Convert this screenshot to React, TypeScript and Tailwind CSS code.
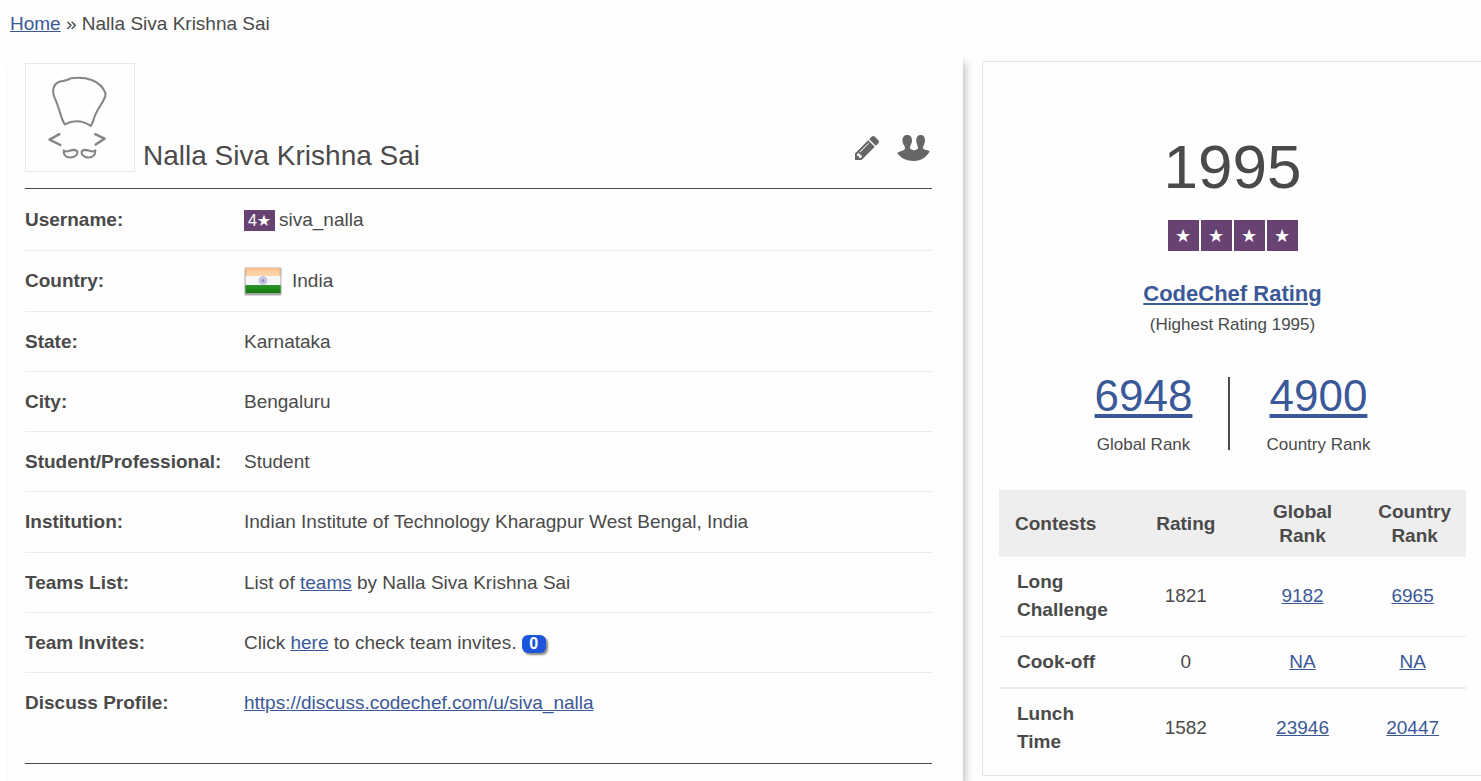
import type { ReactNode } from "react";

const link = "text-[#3b5998] underline";

function Avatar() {
  return (
    <svg viewBox="0 0 110 109" className="h-[109px] w-[110px] shrink-0 border border-[#e8e8e8]" role="img" aria-label="Profile picture">
      <g fill="none" stroke="#858585" strokeWidth="2.100" strokeLinejoin="round" strokeLinecap="round">
        <path d="M39.500 61.500C36 57 34.500 47 30.500 37.500C25 27 28 20 34.500 17.800C40 17 42 17 46 14.500C60 12.500 76 16 81 30C81.500 38 71 45 68.500 58L66 63C57 57 48 57 39.500 61.500Z" />
        <path d="M34 71.500L24 77L35 82.500M70.500 71.500L80 76L71 82" strokeWidth="2.500" />
        <path d="M38.500 88C41 91 44.500 87.500 49 87.500C54 88 53 92.500 49 94.500C43 96.500 38 94.500 38.500 88Z" />
        <path d="M70.500 88C68 91 64.500 87.500 60 87.500C55 88 56 92.500 60 94.500C65 96.500 71 94.500 70.500 88Z" />
      </g>
    </svg>
  );
}

function PencilIcon() {
  return (
    <svg viewBox="128 149 1515 1515" className="size-6" fill="#666" aria-hidden="true">
      <path d="M491 1536l91-91-235-235-91 91v107h128v128h107zm523-928q0-22-22-22-10 0-17 7l-542 542q-7 7-7 17 0 22 22 22 10 0 17-7l542-542q7-7 7-17zm-54-192l416 416-832 832h-416v-416l832-832zm683 96q0 53-37 90l-166 166-416-416 166-165q36-38 90-38 53 0 91 38l235 234q37 39 37 91z" />
    </svg>
  );
}

function TeamIcon() {
  return (
    <svg viewBox="0 0 33 26" className="h-[26px] w-[33px]" fill="#666" aria-hidden="true">
      <path d="M10.300 0C13.500 0 15 2 15 5.500C15 9 13 10.500 13 12.500C13 14.500 15.500 14.800 17.200 15.500C18.500 14.800 21 14.500 21 13C21 11 19.200 9 19.200 5.500C19.200 2 20.800 0 23.700 0C26.700 0 28 2 28 5.500C28 9 26 11 26 13C26 14.800 30 15 32.800 16C30 22 24 26 17 26C9.500 26 3.500 23 0.200 18C3 16 8 15.800 8 13C8 10.500 5.400 9 5.400 5.500C5.400 2 7.200 0 10.300 0Z" />
    </svg>
  );
}

function IndiaFlag() {
  return (
    <svg viewBox="0 0 38 30" className="mt-[2px] h-[30px] w-[38px]" role="img" aria-label="Flag of India">
      <defs>
        <linearGradient id="saffron" x2="0" y2="1">
          <stop stopColor="#ffc796" />
          <stop offset="1" stopColor="#ffd5af" />
        </linearGradient>
        <linearGradient id="green" x2="0" y2="1">
          <stop stopColor="#2c952c" />
          <stop offset="1" stopColor="#13780d" />
        </linearGradient>
      </defs>
      <rect width="38" height="29" rx="2" fill="#bdbdbd" opacity="0.600" />
      <rect x="1" y="1" width="36" height="27" rx="1" fill="#a5a5a5" />
      <rect x="1.500" y="1" width="35" height="8" fill="url(#saffron)" />
      <rect x="1.500" y="9" width="35" height="9" fill="#f6f6f6" />
      <rect x="1.500" y="18" width="35" height="8" fill="url(#green)" />
      <path d="M2.500 8V2H35.500V8" fill="none" stroke="#ffb778" />
      <circle cx="19" cy="13.500" r="3.800" fill="#c9c9e6" stroke="#b8b8dc" />
      <circle cx="19" cy="13.500" r="1.500" fill="#8f8fca" />
    </svg>
  );
}

function Star() {
  return <span className="font-['DejaVu_Sans',sans-serif]">★</span>;
}

const details: { label: string; value: ReactNode; row?: string }[] = [
  {
    label: "Username:",
    row: "h-[62px]",
    value: (
      <>
        <span className="mr-1 inline-flex h-[21px] w-[31px] items-center justify-center bg-[#684273] text-base text-white">
          4<Star />
        </span>
        siva_nalla
      </>
    ),
  },
  {
    label: "Country:",
    row: "h-[61px]",
    value: (
      <span className="flex items-center gap-[10px]">
        <IndiaFlag />
        India
      </span>
    ),
  },
  { label: "State:", value: "Karnataka" },
  { label: "City:", value: "Bengaluru" },
  { label: "Student/Professional:", value: "Student" },
  { label: "Institution:", value: "Indian Institute of Technology Kharagpur West Bengal, India", row: "h-[61px]" },
  {
    label: "Teams List:",
    value: (
      <>
        List of <a href="#teams" className={link}>teams</a> by Nalla Siva Krishna Sai
      </>
    ),
  },
  {
    label: "Team Invites:",
    value: (
      <>
        Click <a href="#invites" className={link}>here</a> to check team invites.{" "}
        <span className="inline-flex h-[18px] w-6 items-center justify-center rounded-md bg-[#1d55dc] text-base font-bold text-white shadow-[2px_2px_2px_#888]">
          0
        </span>
      </>
    ),
  },
  {
    label: "Discuss Profile:",
    value: <a href="#discuss" className={link}>https://discuss.codechef.com/u/siva_nalla</a>,
  },
];

const contests = [
  { name: "Long Challenge", rating: "1821", global: "9182", country: "6965", row: "h-[79px] border-b" },
  { name: "Cook-off", rating: "0", global: "NA", country: "NA", row: "h-[52px] border-b-2" },
  { name: "Lunch Time", rating: "1582", global: "23946", country: "20447", row: "h-[78px]" },
];

function Rank({ value, label }: { value: string; label: string }) {
  return (
    <div className="text-center">
      <a href="#ranking" className="block text-[44px] leading-[44px] text-[#3b5998] underline">{value}</a>
      <div className="mt-[17px] text-[17px] leading-5">{label}</div>
    </div>
  );
}

export default function App() {
  return (
    <div className="flex min-h-screen flex-col overflow-x-hidden bg-[#fefefe] font-['Liberation_Sans',Arial,sans-serif] text-[19px] leading-6 text-[#4a4a4a]">
      <nav aria-label="Breadcrumb" className="px-[10px] pt-3 pb-4">
        <a href="#home" className={link}>Home</a> » Nalla Siva Krishna Sai
      </nav>
      <div className="flex grow items-stretch gap-[19px] pl-2">
        <main className="min-w-0 flex-1 bg-[#fefefe] pr-[31px] pl-[17px] pt-[11px] shadow-[4px_8px_8px_-2px_#bbb]">
          <header className="flex items-end border-b border-[#4a4a4a] pb-4">
            <Avatar />
            <h1 className="ml-2 grow text-[28px] leading-8">Nalla Siva Krishna Sai</h1>
            <div className="mr-[2px] mb-[11px] flex items-center gap-[18px]">
              <button type="button" aria-label="Edit profile"><PencilIcon /></button>
              <button type="button" aria-label="Teams"><TeamIcon /></button>
            </div>
          </header>
          <dl className="border-b border-[#4a4a4a] pb-[30px]">
            {details.map((d) => (
              <div key={d.label} className={`flex items-center border-b border-[#ececec] last:border-0 ${d.row ?? "h-[60px]"}`}>
                <dt className="w-[219px] shrink-0 font-bold">{d.label}</dt>
                <dd>{d.value}</dd>
              </div>
            ))}
          </dl>
        </main>
        <aside className="mt-[9px] w-[499px] shrink-0 self-start border border-r-0 border-[#e4e4e4] pr-[15px] pb-[9px] pl-4">
          <div className="flex flex-col items-center pt-[73px]">
            <div className="text-[62px] leading-[64px]">1995</div>
            <div className="mt-[21px] flex gap-[2px] text-lg leading-none text-white">
              {[1, 2, 3, 4].map((n) => (
                <span key={n} className="flex size-[31px] items-center justify-center bg-[#684273]"><Star /></span>
              ))}
            </div>
            <a href="#rating" className="mt-[30px] text-[22px] leading-[26px] font-bold text-[#3b5998] underline">CodeChef Rating</a>
            <small className="mt-2 text-[17px] leading-5">(Highest Rating 1995)</small>
            <div className="mt-[39px] flex gap-9">
              <Rank value="6948" label="Global Rank" />
              <div className="mt-[3px] h-[73px] w-[2px] bg-[#4a4a4a]" />
              <Rank value="4900" label="Country Rank" />
            </div>
          </div>
          <table className="mt-[35px] w-full table-fixed border-collapse text-center">
            <colgroup>
              <col className="w-[28%]" />
              <col className="w-[24%]" />
              <col className="w-[26%]" />
              <col className="w-[22%]" />
            </colgroup>
            <thead>
              <tr className="h-[67px] bg-[#eee]">
                <th scope="col" className="pl-4 text-left">Contests</th>
                <th scope="col">Rating</th>
                <th scope="col" className="px-5">Global Rank</th>
                <th scope="col" className="px-3">Country Rank</th>
              </tr>
            </thead>
            <tbody>
              {contests.map((c) => (
                <tr key={c.name} className={`border-[#ececec] ${c.row}`}>
                  <th scope="row" className="pr-4 pl-[18px] text-left leading-7">{c.name}</th>
                  <td>{c.rating}</td>
                  <td><a href="#global" className={link}>{c.global}</a></td>
                  <td className="pr-1"><a href="#country" className={link}>{c.country}</a></td>
                </tr>
              ))}
            </tbody>
          </table>
        </aside>
      </div>
    </div>
  );
}
